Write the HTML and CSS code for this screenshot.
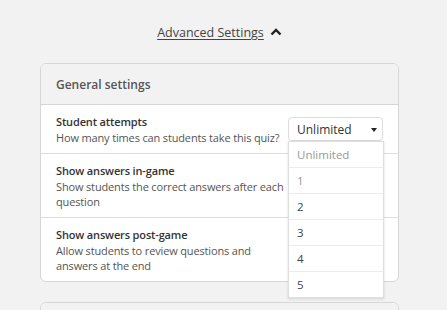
FILE: index.html
```html
<!DOCTYPE html>
<html lang="en">
<head>
    <meta charset="UTF-8">
    <meta name="viewport" content="width=device-width, initial-scale=1.0">
    <title>Quiz settings</title>
    <link rel="stylesheet" href="styles.css">
</head>
<body>
    <div class="settings">
        <div class="advanced">
            <a href="#" class="advanced__link">Advanced Settings</a>
            <svg class="advanced__icon" width="12" height="8" viewBox="0 0 12 8">
                <path d="M1.5 6.5 L6 2 L10.5 6.5" fill="none" stroke="#222" stroke-width="2.4"/>
            </svg>
        </div>

        <!-- General settings card -->
        <div class="card">
            <div class="card__header">General settings</div>

            <div class="row">
                <div class="row__text">
                    <div class="row__label">Student attempts</div>
                    <div class="row__desc">How many times can students take this quiz?</div>
                </div>
                <div class="select">
                    <div class="select__box">
                        <span>Unlimited</span>
                        <span class="select__caret"></span>
                    </div>
                    <ul class="select__menu">
                        <li class="select__item select__item--muted">Unlimited</li>
                        <li class="select__item select__item--muted">1</li>
                        <li class="select__item">2</li>
                        <li class="select__item">3</li>
                        <li class="select__item">4</li>
                        <li class="select__item">5</li>
                    </ul>
                </div>
            </div>

            <div class="row">
                <div class="row__text">
                    <div class="row__label">Show answers in-game</div>
                    <div class="row__desc">Show students the correct answers after each question</div>
                </div>
            </div>

            <div class="row">
                <div class="row__text">
                    <div class="row__label">Show answers post-game</div>
                    <div class="row__desc">Allow students to review questions and answers at the end</div>
                </div>
            </div>
        </div>

        <div class="card card--next">
            <div class="card__header">&nbsp;</div>
        </div>
    </div>
</body>
</html>
```

FILE: styles.css
```css
body {
    margin: 0;
    padding: 0;
    background-color: #f2f2f2;
    font-family: "Open Sans", Arial, sans-serif;
    color: #333;
    overflow: hidden;
}

.settings {
    width: 359px;
    margin-left: 40px;
}

/* Advanced toggle */
.advanced {
    display: flex;
    justify-content: center;
    align-items: center;
    gap: 6px;
    padding-top: 22px;
    height: 21px;
    margin-bottom: 20px;
}

.advanced__link {
    font-size: 12.5px;
    color: #444;
    text-decoration: underline;
    text-underline-offset: 2px;
}

.advanced__icon {
    margin-top: -2px;
}

/* Card */
.card {
    background-color: #fff;
    border: 1px solid #d6d6d6;
    border-radius: 6px;
}

.card--next {
    margin-top: 20px;
}

.card__header {
    background-color: #f2f2f2;
    border-radius: 6px 6px 0 0;
    border-bottom: 1px solid #d6d6d6;
    height: 40px;
    line-height: 41px;
    padding: 0 15px;
    font-size: 12px;
    font-weight: 600;
    color: #555;
}

.row {
    display: flex;
    align-items: center;
    justify-content: space-between;
    padding: 8px 15px;
    border-bottom: 1px solid #dedede;
}

.row:last-child {
    border-bottom: none;
}

.row__text {
    flex: 1;
    max-width: 232px;
}

.row__label {
    font-size: 11px;
    font-weight: 600;
    letter-spacing: -0.15px;
    line-height: 17px;
    color: #333;
}

.row__desc {
    font-size: 11px;
    letter-spacing: -0.15px;
    line-height: 15px;
    color: #555;
}

/* Select + open menu */
.select {
    position: relative;
}

.select__box {
    width: 93px;
    height: 22px;
    border: 1px solid #dcdcdc;
    border-radius: 4px;
    background-color: #fff;
    display: flex;
    align-items: center;
    justify-content: space-between;
    font-size: 12px;
    color: #333;
}

.select__box span:first-child {
    padding-left: 8px;
}

.select__caret {
    width: 0;
    height: 0;
    border-left: 3.5px solid transparent;
    border-right: 3.5px solid transparent;
    border-top: 4px solid #222;
    margin-right: 5px;
    margin-top: 1px;
}

.select__menu {
    position: absolute;
    top: 24px;
    left: 0;
    width: 94px;
    margin: 0;
    padding: 0;
    list-style: none;
    background-color: #fff;
    border: 1px solid #dedede;
    box-shadow: 0 1px 3px rgba(0, 0, 0, 0.12);
    z-index: 10;
}

.select__item {
    height: 25px;
    line-height: 25px;
    padding-left: 8px;
    font-size: 11.5px;
    color: #444;
    border-top: 1px solid #ececec;
}

.select__item:first-child {
    border-top: none;
}

.select__item--muted {
    color: #999;
}
```
